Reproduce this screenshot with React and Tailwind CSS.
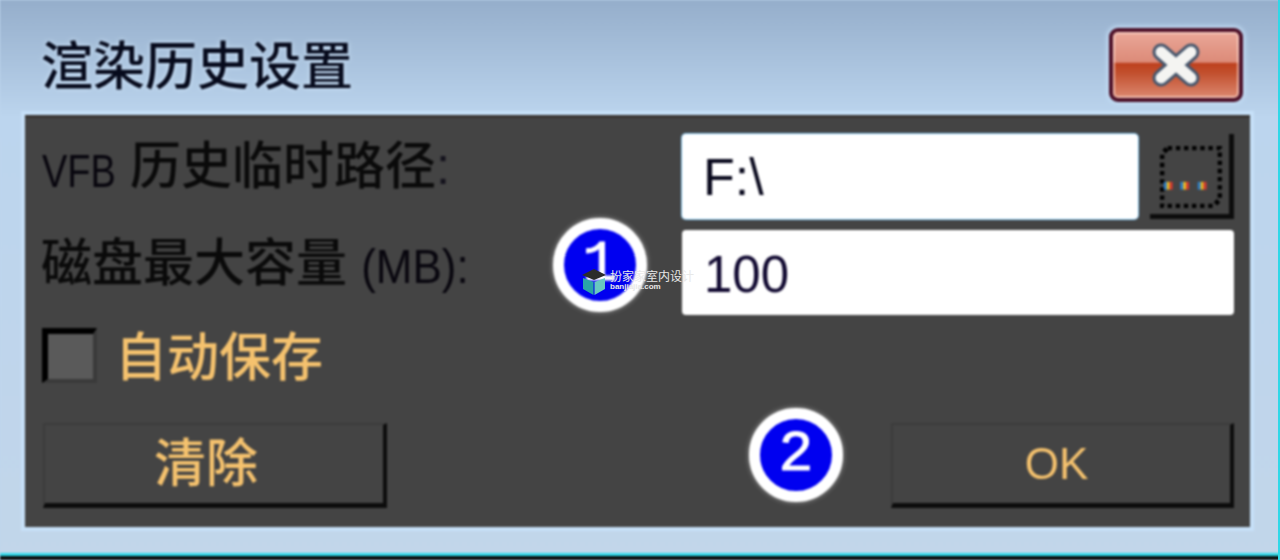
import React from 'react';

const CJK = "font-['Liberation_Sans','Noto_Sans_CJK_SC',sans-serif]";

const CloseIcon = () => (
  <svg width="54" height="44" viewBox="0 0 54 44">
    <path d="M12 9 L42 35 M42 9 L12 35" stroke="#46566c" strokeWidth="17" strokeLinecap="round" />
    <path d="M12 9 L42 35 M42 9 L12 35" stroke="#f4f4f2" strokeWidth="11" strokeLinecap="round" />
  </svg>
);

const DotsIcon = () => (
  <svg width="62" height="62" viewBox="0 0 64 64">
    <path d="M8 2 H62 V55 L55 62 H2 V8 Z" fill="none" stroke="#000" strokeWidth="5" strokeDasharray="4.5 3.9" />
    {[8, 25, 43].map((x) => (
      <g key={x}>
        <rect x={x - 4} y="37" width="3" height="8" fill="#2a80d0" />
        <rect x={x - 1} y="37" width="3" height="8" fill="#f0c020" />
        <rect x={x + 2} y="37" width="3" height="8" fill="#d83a30" />
      </g>
    ))}
  </svg>
);

const Badge = ({ n, className }) => (
  <div className={`absolute w-[94px] h-[94px] rounded-full bg-[#0000f0] border-[11px] border-white shadow-[0_0_5px_rgba(255,255,255,0.5)] flex items-center justify-center text-white text-[58px] leading-none [-webkit-text-stroke:1px_white] font-['Liberation_Mono',monospace] ${className}`}>
    {n}
  </div>
);

const Watermark = () => (
  <div className="absolute left-[582px] top-[268px] flex items-start gap-[4px]">
    <svg width="24" height="27" viewBox="0 0 24 27">
      <path d="M0 7 L12 1 L24 7 L12 12 Z" fill="#2c2c2c" />
      <path d="M1 10 L11.5 14 V27 L1 21 Z" fill="#2aa4a8" />
      <path d="M23 10 L12.5 14 V27 L23 21 Z" fill="#68c8c0" />
    </svg>
    <div className="flex flex-col text-[#e8e8e8]">
      <span className="text-[12px] leading-[15px] font-['Noto_Sans_CJK_SC',sans-serif]">扮家家室内设计</span>
      <span className="text-[8px] leading-[8px] font-bold font-['Liberation_Sans',sans-serif]">banjiajia.com</span>
    </div>
  </div>
);

const FlatButton = ({ children, className }) => (
  <button className={`h-[85px] bg-[#444444] border-t-2 border-l-2 border-[#3c3c3c] border-r-[4px] border-b-[5px] border-r-[#0c0c0c] border-b-[#0c0c0c] text-[#f5c26e] ${className}`}>
    {children}
  </button>
);

export default function App() {
  return (
    <div className="relative w-[1280px] h-[560px] overflow-hidden bg-[#bcd5ee] border-r-2 border-r-[#2fd8e8]">
      <div className={`relative w-[1280px] h-[560px] flex flex-col font-medium bg-[linear-gradient(180deg,#95aecb_0%,#bcd5ee_21%,#c2d6ea_100%)] ${CJK} blur-[0.8px]`}>
        {/* title bar */}
        <div className="h-[115px] shrink-0 flex items-start justify-between pl-[41px] pr-[37px]">
          <h1 className="mt-[34px] text-[52px] leading-[66px] text-[#060a1c] font-medium [text-shadow:0_0_5px_#d4eaff]">渲染历史设置</h1>
          <button className="mt-[28px] w-[134px] h-[74px] rounded-[9px] border-[4px] border-[#4c1028] shadow-[0_0_4px_2px_#c4def6,inset_0_0_0_2px_rgba(255,225,215,0.6)] flex items-center justify-center bg-[linear-gradient(180deg,#eaa898_0%,#dc8a78_46%,#bd3f1c_47%,#c2502e_62%,#dc8870_100%)]">
            <CloseIcon />
          </button>
        </div>

        {/* dialog body */}
        <div className="ml-[25px] w-[1225px] h-[412px] shrink-0 bg-[#444444] border-t-[3px] border-[#393634] shadow-[0_0_0_4px_#c6e0f8] pt-[16px] pl-[18px] pr-[16px] flex flex-col">
          <div className="grid grid-cols-[627px_456px_84px] gap-x-[12px] gap-y-[11px]">
            <label className="-ml-[1px] text-[51px] leading-[66px] text-[#0a0a0a] whitespace-nowrap">
              <span className="inline-block scale-y-[1.2] text-[38px] text-[#08060e]">VFB</span> 历史临时路径<span className="text-[#14121c]">:</span>
            </label>
            <input readOnly value="F:\" className="h-[85px] bg-white rounded-[4px] px-[21px] text-[52px] text-[#08081c] outline-none shadow-[0_0_0_1px_#7cc0ec]" />
            <button className="h-[85px] bg-[#444444] border-r-[5px] border-b-[5px] border-[#0c0c0c] flex items-center justify-center pl-[2px] pt-[5px]">
              <DotsIcon />
            </button>

            <label className="-ml-[2px] mt-[1px] text-[51px] leading-[66px] text-[#0a0a0a] whitespace-nowrap">
              磁盘最大容量 <span className="inline-block scale-y-110 text-[44px] text-[#08060e]">(MB):</span>
            </label>
            <input readOnly value="100" className="col-span-2 h-[85px] bg-white rounded-[4px] px-[22px] pt-[4px] text-[51px] text-[#100830] outline-none" />
          </div>

          <div className="mt-[13px] -ml-[1px] flex items-start gap-[18px]">
            <div className="w-[55px] h-[55px] bg-[#5a5a5a] border-t-[6px] border-l-[6px] border-black border-r-[4px] border-b-[4px] border-r-[#3a3a3a] border-b-[#3a3a3a]" />
            <span className="text-[52px] leading-[60px] text-[#f5c26e]">自动保存</span>
          </div>

          <div className="mt-[35px] flex justify-between">
            <FlatButton className="w-[344px] pr-[16px] text-[52px] leading-none">清除</FlatButton>
            <FlatButton className="w-[343px] pr-[10px] text-[44px] leading-none">OK</FlatButton>
          </div>
        </div>

        {/* bottom edge of the window */}
        <div className="flex-1 flex flex-col justify-end">
          <div className="h-[3px] bg-[#2fd8e8]" />
          <div className="h-[4px] bg-[#0a0a0a]" />
        </div>

        <Badge n="1" className="left-[553px] top-[218px]" />
        <Badge n="2" className="left-[749px] top-[408px]" />
      </div>
      <Watermark />
    </div>
  );
}
